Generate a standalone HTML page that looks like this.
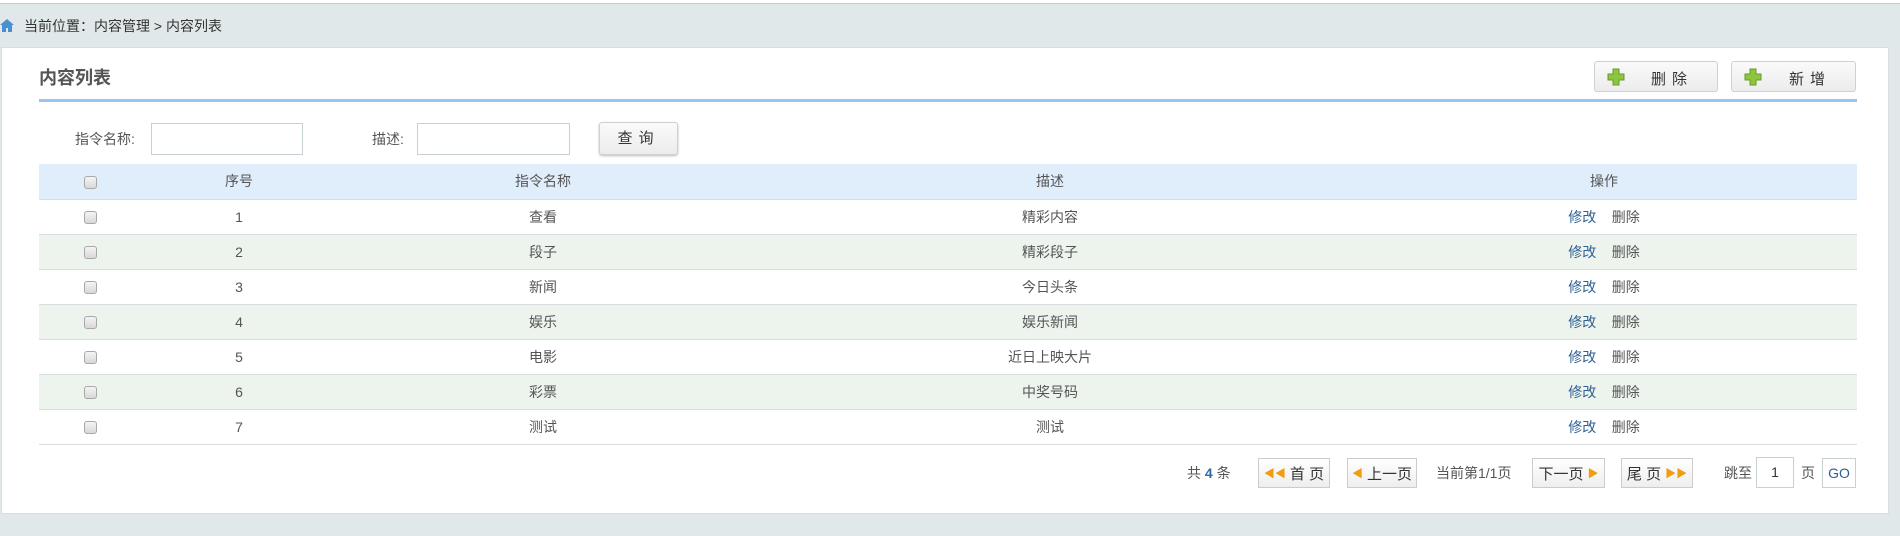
<!DOCTYPE html>
<html><head><meta charset="utf-8"><style>
*{margin:0;padding:0;box-sizing:border-box}
body{width:1900px;height:536px;background:#e1e8ea;font-family:"Liberation Sans","Noto Sans CJK SC",sans-serif;font-size:14px;color:#555;position:relative;overflow:hidden}
.top{position:absolute;left:0;top:0;width:1900px;height:4px;background:#fff;border-bottom:1px solid #c8cccf}
.crumb{position:absolute;left:24px;top:16px;font-size:14px;color:#333}
.home{position:absolute;left:0;top:19px}
.panel{position:absolute;left:1px;top:47px;width:1888px;height:467px;background:#fff;border:1px solid #d8dde0}
.a{position:absolute}
.title{left:39px;top:64px;font-size:18px;font-weight:bold;color:#555}
.bline{left:39px;top:99px;width:1818px;height:3px;background:#98c5ef}
.btn{height:31px;border:1px solid #d0d0d0;border-radius:3px;background:linear-gradient(#fafafa,#ececec);color:#333;font-size:15px;letter-spacing:6px}
.inp{height:32px;border:1px solid #c7d1d4;background:#fff}
table{position:absolute;left:39px;top:164px;width:1818px;border-collapse:collapse}
td,th{height:35px;text-align:center;font-weight:normal;border-bottom:1px solid #d9dde0;font-size:14px;color:#555}
th{background:#e0edfb}
tr.g td{background:#ecf4ed}
.cb{display:inline-block;width:13px;height:13px;border:1px solid #a8a8a8;border-radius:3px;background:linear-gradient(#f4f4f4,#d8d8d8);vertical-align:middle}
.lk{color:#2d5f94}
.pg{height:30px;border:1px solid #ccc;background:linear-gradient(#fff,#eee);font-size:15px;color:#333;display:flex;align-items:center;justify-content:center;gap:4px}
.tri{color:#f39c12;font-size:11px}
</style></head><body>
<div class="top"></div>
<svg class="home" width="14" height="13" viewBox="0 0 14 13"><path d="M7 0L0 6h2v7h4V9h2v4h4V6h2z" fill="#4a90d0"/></svg>
<div class="crumb">当前位置：内容管理 &gt; 内容列表</div>
<div class="panel"></div>
<div class="a title">内容列表</div>
<div class="a bline"></div>
<div class="a btn" style="left:1594px;top:61px;width:124px"><svg class="a" style="left:12px;top:6px" width="18" height="18" viewBox="0 0 18 18"><path d="M6 1h6v5h5v6h-5v5H6v-5H1V6h5z" fill="#8cc63f" stroke="#6a9a2a"/></svg><span class="a" style="left:56px;top:6px">删除</span></div>
<div class="a btn" style="left:1731px;top:61px;width:125px"><svg class="a" style="left:12px;top:6px" width="18" height="18" viewBox="0 0 18 18"><path d="M6 1h6v5h5v6h-5v5H6v-5H1V6h5z" fill="#8cc63f" stroke="#6a9a2a"/></svg><span class="a" style="left:57px;top:6px">新增</span></div>
<div class="a" style="left:75px;top:129px">指令名称:</div>
<div class="a inp" style="left:151px;top:123px;width:152px"></div>
<div class="a" style="left:372px;top:129px">描述:</div>
<div class="a inp" style="left:417px;top:123px;width:153px"></div>
<div class="a btn" style="left:599px;top:122px;width:79px;height:33px;box-shadow:0 1px 2px #bbb;text-align:center;line-height:31px;font-size:15px">查询</div>
<table>
<colgroup><col style="width:102px"><col style="width:196px"><col style="width:412px"><col style="width:602px"><col style="width:506px"></colgroup>
<tr><th><span class="cb"></span></th><th>序号</th><th>指令名称</th><th>描述</th><th>操作</th></tr>
<tr><td><span class="cb"></span></td><td>1</td><td>查看</td><td>精彩内容</td><td><span class="lk">修改</span>&nbsp;&nbsp;&nbsp;&nbsp;删除</td></tr>
<tr class="g"><td><span class="cb"></span></td><td>2</td><td>段子</td><td>精彩段子</td><td><span class="lk">修改</span>&nbsp;&nbsp;&nbsp;&nbsp;删除</td></tr>
<tr><td><span class="cb"></span></td><td>3</td><td>新闻</td><td>今日头条</td><td><span class="lk">修改</span>&nbsp;&nbsp;&nbsp;&nbsp;删除</td></tr>
<tr class="g"><td><span class="cb"></span></td><td>4</td><td>娱乐</td><td>娱乐新闻</td><td><span class="lk">修改</span>&nbsp;&nbsp;&nbsp;&nbsp;删除</td></tr>
<tr><td><span class="cb"></span></td><td>5</td><td>电影</td><td>近日上映大片</td><td><span class="lk">修改</span>&nbsp;&nbsp;&nbsp;&nbsp;删除</td></tr>
<tr class="g"><td><span class="cb"></span></td><td>6</td><td>彩票</td><td>中奖号码</td><td><span class="lk">修改</span>&nbsp;&nbsp;&nbsp;&nbsp;删除</td></tr>
<tr><td><span class="cb"></span></td><td>7</td><td>测试</td><td>测试</td><td><span class="lk">修改</span>&nbsp;&nbsp;&nbsp;&nbsp;删除</td></tr>
</table>
<div class="a" style="left:1187px;top:463px">共 <b style="color:#2d6aa8">4</b> 条</div>
<div class="a pg" style="left:1258px;top:458px;width:72px"><span class="tri">◀◀</span> 首 页</div>
<div class="a pg" style="left:1347px;top:458px;width:70px"><span class="tri">◀</span>上一页</div>
<div class="a" style="left:1436px;top:463px">当前第1/1页</div>
<div class="a pg" style="left:1532px;top:458px;width:73px">下一页<span class="tri">▶</span></div>
<div class="a pg" style="left:1621px;top:458px;width:72px">尾 页<span class="tri">▶▶</span></div>
<div class="a" style="left:1724px;top:463px">跳至</div>
<div class="a inp" style="left:1756px;top:457px;width:38px;height:31px;text-align:center;line-height:29px;color:#333">1</div>
<div class="a" style="left:1801px;top:463px">页</div>
<div class="a inp" style="left:1822px;top:458px;width:34px;height:30px;text-align:center;line-height:28px;color:#2d5f94">GO</div>
</body></html>
